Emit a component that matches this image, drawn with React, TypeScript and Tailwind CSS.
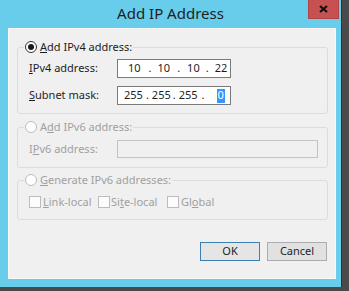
import React from "react";

const font = { fontFamily: '"Noto Sans", "Open Sans", sans-serif' };

function Radio({ checked, disabled }: { checked?: boolean; disabled?: boolean }) {
  return (
    <span
      className={
        "flex h-[12px] w-[12px] items-center justify-center rounded-full border bg-white " +
        (disabled ? "border-[#bcbcbc]" : "border-[#333333]")
      }
    >
      {checked && <span className="h-[6px] w-[6px] rounded-full bg-[#1a1a1a]" />}
    </span>
  );
}

function Check() {
  return <span className="h-[12px] w-[12px] border border-[#bcbcbc] bg-[#fcfcfc]" />;
}

export default function App() {
  return (
    <div className="h-[291px] w-[349px] overflow-hidden bg-[#4a4a4a]" style={font}>
      <div className="flex h-[287px] w-[342px] flex-col bg-[#68cdea] border-r border-[#2e2e2e]">
        {/* title bar */}
        <div className="relative flex h-[28px] items-center justify-center">
          <span className="-mt-[2px] text-[15px] leading-none text-[#1e1e1e]">Add IP Address</span>
          <div className="absolute right-[2px] top-0 flex h-[19px] w-[31px] items-center justify-center bg-[#c75050] border-x border-b border-[#b04444]">
            <svg width="9" height="8" viewBox="0 0 9 8">
              <path d="M1 1 L8 7 M8 1 L1 7" stroke="#111" strokeWidth="2.2" />
            </svg>
          </div>
        </div>
        {/* client */}
        <div className="ml-[8px] flex h-[251px] w-[328px] flex-col border border-[#f7f7f7] bg-[#f0f0f0] text-[11px] text-[#1e1e1e]">
          {/* group 1 */}
          <fieldset className="ml-[8px] mt-[10px] w-[311px] rounded-[3px] border border-[#dcdcdc] p-0">
            <legend className="ml-[6px] flex h-[16px] items-center gap-[3px] px-[1px]">
              <Radio checked />
              <span><u>A</u>dd IPv4 address:</span>
            </legend>
            <div className="mt-[4px] flex flex-col gap-[8px] pb-[8px] pl-[11px]">
              <div className="flex h-[19px] items-center">
                <span className="w-[88px]"><u>I</u>Pv4 address:</span>
                <div className="flex h-[19px] w-[114px] items-center border border-[#7a7a7a] bg-white text-[11px]">
                  <span className="ml-[10px]">10</span>
                  <span className="ml-[8px]">.</span>
                  <span className="ml-[6px]">10</span>
                  <span className="ml-[7px]">.</span>
                  <span className="ml-[7px]">10</span>
                  <span className="ml-[6px]">.</span>
                  <span className="ml-[6px]">22</span>
                </div>
              </div>
              <div className="flex h-[19px] items-center">
                <span className="w-[88px]"><u>S</u>ubnet mask:</span>
                <div className="flex h-[19px] w-[114px] items-center border border-[#7a7a7a] bg-white text-[11px]">
                  <span className="ml-[6px]">255</span>
                  <span className="ml-[3px]">.</span>
                  <span className="ml-[3px]">255</span>
                  <span className="ml-[2px]">.</span>
                  <span className="ml-[3px]">255</span>
                  <span className="ml-[4px]">.</span>
                  <span className="ml-[12px] flex h-[14px] w-[8px] items-center justify-center bg-[#3399ff] text-white">0</span>
                </div>
              </div>
            </div>
          </fieldset>
          {/* group 2 */}
          <fieldset className="ml-[8px] mt-[5px] w-[311px] rounded-[3px] border border-[#dcdcdc] p-0 text-[#a0a0a0]">
            <legend className="ml-[6px] flex h-[16px] items-center gap-[3px] px-[1px]">
              <Radio disabled />
              <span>A<u>d</u>d IPv6 address:</span>
            </legend>
            <div className="mt-[5px] flex h-[18px] items-center pb-0 pl-[11px]">
              <span className="w-[88px]">I<u>P</u>v6 address:</span>
              <div className="h-[18px] w-[201px] border border-[#c3c3c3] bg-[#f0f0f0]" />
            </div>
            <div className="h-[9px]" />
          </fieldset>
          {/* group 3 */}
          <fieldset className="ml-[8px] mt-[4px] w-[311px] rounded-[3px] border border-[#dcdcdc] p-0 text-[#a0a0a0]">
            <legend className="ml-[6px] flex h-[16px] items-center gap-[3px] px-[1px]">
              <Radio disabled />
              <span><u>G</u>enerate IPv6 addresses:</span>
            </legend>
            <div className="mt-[8px] flex h-[12px] items-center pb-0 pl-[11px]">
              <Check />
              <span className="ml-[2px] w-[55px]"><u>L</u>ink-local</span>
              <Check />
              <span className="ml-[1px] w-[56px]">Si<u>t</u>e-local</span>
              <Check />
              <span className="ml-[2px]">Gl<u>o</u>bal</span>
            </div>
            <div className="h-[11px]" />
          </fieldset>
          {/* buttons */}
          <div className="mr-[8px] mt-[22px] flex justify-end gap-[7px]">
            <button className="flex h-[19px] w-[60px] items-center justify-center border border-[#3c7fb1] bg-[#e5e5e5] text-[11px] text-[#1e1e1e]">
              OK
            </button>
            <button className="flex h-[19px] w-[60px] items-center justify-center border border-[#acacac] bg-[#e1e1e1] text-[11px] text-[#1e1e1e]">
              Cancel
            </button>
          </div>
        </div>
      </div>
    </div>
  );
}
